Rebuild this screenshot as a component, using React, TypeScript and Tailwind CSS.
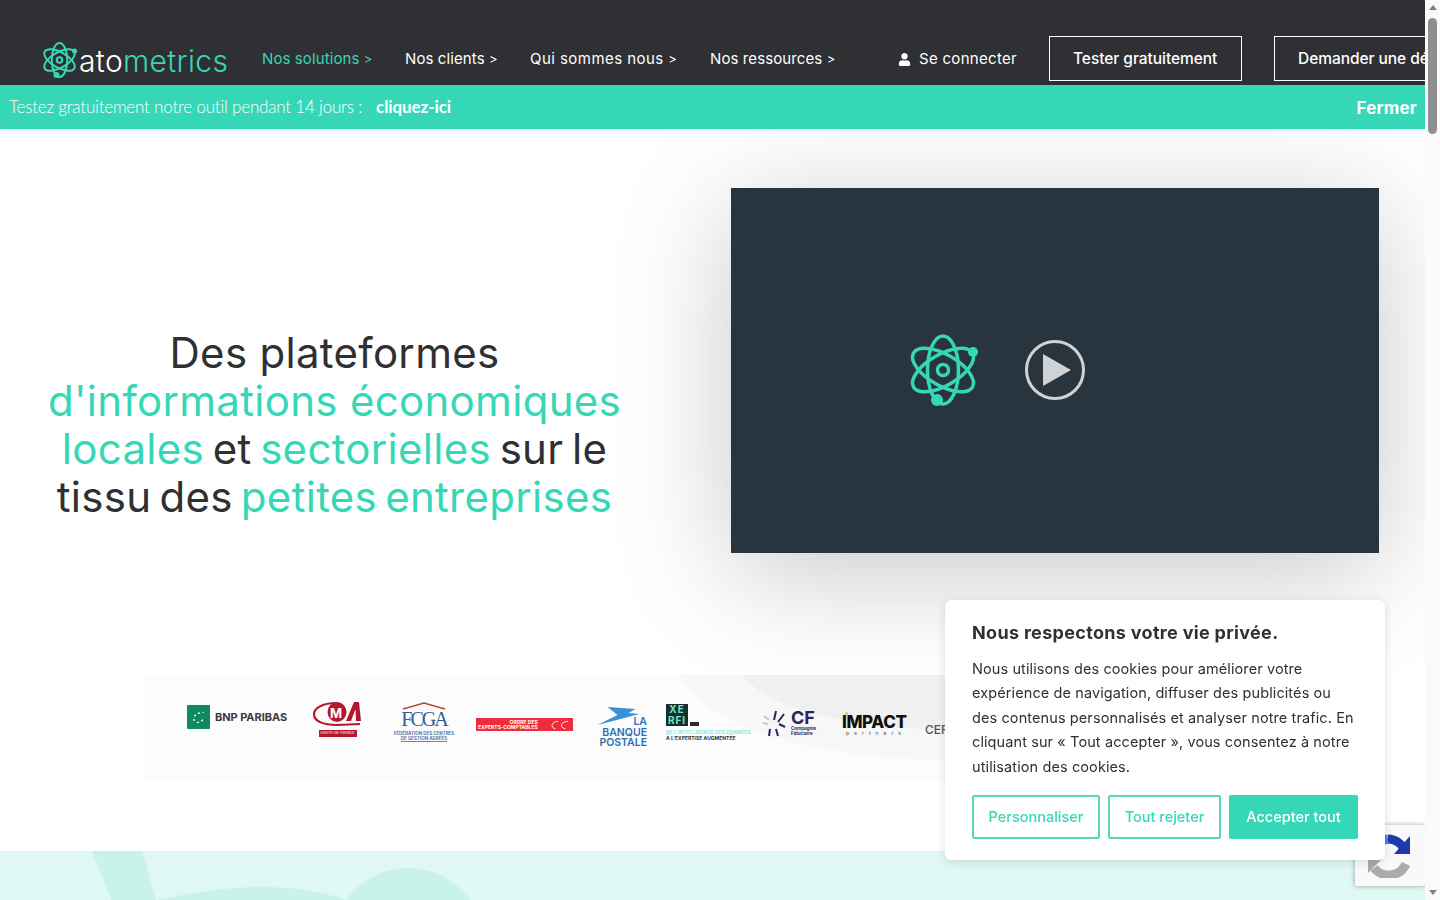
import { FaUser } from 'react-icons/fa';

const font = { fontFamily: 'Inter, "Noto Sans", sans-serif' };

function Atom({ className, weight = 3.5 }: { className: string; weight?: number }) {
  const stroke = '#36d7b7';
  return (
    <svg viewBox="0 0 72 72" fill="none" stroke={stroke} strokeWidth={weight} className={className}>
      <ellipse cx="35" cy="36" rx="15.5" ry="34" />
      <ellipse cx="35" cy="36" rx="15.5" ry="34" transform="rotate(60 35 36)" />
      <ellipse cx="35" cy="36" rx="15.5" ry="34" transform="rotate(120 35 36)" />
      <circle cx="35" cy="36" r="5.5" />
      <circle cx="65" cy="18" r="5" fill={stroke} stroke="none" />
      <circle cx="29" cy="66" r="6" fill={stroke} stroke="none" />
    </svg>
  );
}

function NavLink({ label, active, className }: { label: string; active?: boolean; className: string }) {
  return (
    <a className={`mt-[2px] text-[15px] whitespace-nowrap ${active ? 'text-[#36d7b7]' : 'text-white'} ${className}`}>
      {label} <span className="text-[13px]">&gt;</span>
    </a>
  );
}

function Logos() {
  return (
    <div className="relative z-0 ml-[143px] mt-[122px] h-[105px] w-[1140px] overflow-hidden bg-[#fcfcfc]">
      <svg viewBox="0 0 300 105" className="absolute left-[535px] top-0 h-[105px] w-[300px]">
        <path d="M2 0 C30 50 120 85 300 86 L300 0 Z" fill="#f7f7f7" />
        <path d="M65 0 C90 35 170 54 300 56 L300 0 Z" fill="#f0f0f0" />
      </svg>
      <div className="relative flex h-full items-start pl-[44px]">
        <div className="mt-[30px] flex w-[101px] shrink-0 items-center gap-[5px]">
          <div className="flex h-[24px] w-[23px] items-center justify-center rounded-[1px] bg-[#0f8a5f]">
            <svg viewBox="0 0 24 24" className="h-4 w-4" fill="none" stroke="#ffffff" strokeWidth="2" strokeDasharray="3 4">
              <path d="M5 18 C2 10 10 5 19 5" />
              <path d="M9 20 C14 21 18 17 19 13" />
            </svg>
          </div>
          <span className="whitespace-nowrap text-[11px] font-bold tracking-[-0.05px] text-[#3a3a3a]">BNP PARIBAS</span>
        </div>
        <div className="relative ml-[25px] mt-[26px] flex h-[36px] w-[49px] shrink-0 flex-col items-center">
          <svg viewBox="0 0 49 26" className="h-[26px] w-[49px]" fill="none">
            <path d="M24 2 C8 2 1 8 1 13 C1 20 10 24 24 24 L47 23" stroke="#b3182f" strokeWidth="2.2" />
            <ellipse cx="24" cy="11" rx="9.5" ry="10" fill="#b3182f" />
            <path d="M33 20 L41 1 L46 1 L48 20 L43 20 L42.5 8 L38 20 Z" fill="#b3182f" />
          </svg>
          <span className="absolute left-[17px] top-[4px] text-[13px] leading-[16px] font-bold text-white">M</span>
          <span className="mt-[3px] w-[38px] overflow-hidden bg-[#b3182f] text-center text-[3.5px] leading-[7px] whitespace-nowrap text-white">HAUTS-DE-FRANCE</span>
        </div>
        <div className="ml-[31px] mt-[27px] flex w-[62px] shrink-0 flex-col items-center">
          <svg viewBox="0 0 44 8" className="h-[8px] w-[44px]" fill="none" stroke="#c2402f" strokeWidth="1.5">
            <path d="M1 7 L22 1 L43 7" />
          </svg>
          <span className="text-[20px] leading-[19px] tracking-[-2px] text-[#2f5a9c]" style={{ fontFamily: '"Liberation Serif", serif' }}>FCGA</span>
          <span className="mt-[2px] whitespace-nowrap text-[4.5px] leading-[5px] font-bold text-[#5a78a8]">FÉDÉRATION DES CENTRES</span>
          <span className="whitespace-nowrap border-b border-[#d85a5a] text-[4.5px] leading-[5px] font-bold text-[#5a78a8]">DE GESTION AGRÉÉS</span>
        </div>
        <div className="ml-[21px] mt-[43px] flex h-[13px] w-[97px] shrink-0 items-center justify-between bg-[#ee2d3c] pl-[2px] pr-[3px]">
          <span className="text-right text-[5px] leading-[5px] font-bold whitespace-nowrap text-white">ORDRE DES<br />EXPERTS-COMPTABLES</span>
          <svg viewBox="0 0 24 10" className="h-[10px] w-[22px]" fill="none" stroke="#ffffff" strokeWidth="1">
            <path d="M11 1 C4 1 2 8 8 9 M22 1 C14 1 12 8 19 9" />
          </svg>
        </div>
        <div className="ml-[21px] mt-[32px] flex w-[53px] shrink-0 flex-col items-end">
          <svg viewBox="0 0 50 18" className="-mb-[8px] h-[18px] w-[53px] self-start" fill="#3a8fd6">
            <path d="M12 0 L40 2 L33 6 L44 7 L2 18 L22 8 Z" />
          </svg>
          <span className="text-right text-[10.5px] leading-[10.5px] font-semibold text-[#2d6fb5]">LA<br />BANQUE<br />POSTALE</span>
        </div>
        <div className="ml-[19px] mt-[29px] w-[84px] shrink-0">
          <div className="flex items-end gap-[2px]">
            <span className="w-[22px] bg-[#15302c] text-center text-[10px] leading-[11px] font-bold tracking-[1px] text-[#6fe3c7]">XE<br />RFI</span>
            <span className="h-[4px] w-[9px] bg-[#2a2a2a]" />
          </div>
          <p className="mt-[3px] whitespace-nowrap text-[5px] leading-[6px] font-bold text-[#8fe9dc]">DE L'INTELLIGENCE DES DONNÉES</p>
          <p className="whitespace-nowrap text-[5px] leading-[6px] font-bold text-[#333333]">À L'EXPERTISE AUGMENTÉE</p>
        </div>
        <div className="ml-[12px] mt-[35px] flex w-[58px] shrink-0 items-start gap-[5px]">
          <svg viewBox="0 0 24 28" className="h-[28px] w-[24px]" fill="none" stroke="#2a2560" strokeWidth="2">
            <path d="M14 1 L12 10 M22 4 L16 12 M23 17 L17 14 M16 26 L14 19 M7 26 L8 19" />
            <path d="M1 13 L6 14 M2 6 L7 10" stroke="#c9c9d6" />
          </svg>
          <div>
            <p className="text-[18px] leading-[16px] font-bold text-[#2a2560]">CF</p>
            <p className="text-[4.5px] leading-[5px] font-bold text-[#2a2560]">Compagnie<br />Fiduciaire</p>
          </div>
        </div>
        <div className="relative ml-[22px] mt-[39px] w-[66px] shrink-0">
          <span className="absolute -top-[2px] left-[3px] h-[3px] w-[3px] rounded-full bg-[#e8c440]" />
          <p className="text-[17px] leading-[16px] font-extrabold tracking-[-0.4px] whitespace-nowrap text-[#111111]">IMPACT</p>
          <p className="pl-[4px] text-[5px] leading-[6px] tracking-[5px] whitespace-nowrap text-[#555555]">partners</p>
        </div>
        <span className="ml-[17px] mt-[48px] shrink-0 text-[12px] leading-[14px] font-medium text-[#555555]">CERFRANCE</span>
      </div>
    </div>
  );
}

function CookieCard() {
  return (
    <div className="fixed left-[945px] top-[600px] z-20 h-[260px] w-[440px] rounded-[6px] bg-white px-[27px] pt-[21px] shadow-[0_2px_10px_rgba(0,0,0,0.12)]">
      <h2 className="text-[18px] leading-[24px] font-bold tracking-[0.32px] whitespace-nowrap text-[#2f3033]">Nous respectons votre vie privée.</h2>
      <p className="mt-[11.5px] text-[14.5px] leading-[24.5px] tracking-[0.1px] whitespace-nowrap text-[#2f3033]">
        Nous utilisons des cookies pour améliorer votre<br />
        expérience de navigation, diffuser des publicités ou<br />
        des contenus personnalisés et analyser notre trafic. En<br />
        cliquant sur « Tout accepter », vous consentez à notre<br />
        utilisation des cookies.
      </p>
      <div className="mt-[15.5px] flex gap-2">
        <button className="h-[44px] w-[128px] rounded-[2px] border-2 border-[#5bd3bb] text-[14.5px] font-medium text-[#36d7b7]">Personnaliser</button>
        <button className="h-[44px] w-[113px] rounded-[2px] border-2 border-[#5bd3bb] text-[14.5px] font-medium text-[#36d7b7]">Tout rejeter</button>
        <button className="h-[44px] w-[129px] rounded-[2px] bg-[#36d7b7] text-[14.5px] font-medium text-white">Accepter tout</button>
      </div>
    </div>
  );
}

function Recaptcha() {
  return (
    <div className="fixed left-[1355px] top-[825px] z-10 flex h-[61px] w-[70px] items-center justify-center rounded-[2px] bg-[#f9f9f9] shadow-[0_0_5px_rgba(0,0,0,0.35)]">
      <svg viewBox="0 0 44 44" className="h-[44px] w-[44px]" fill="none">
        <path d="M6 34 A19 19 0 0 0 38 30" stroke="#ababab" strokeWidth="9" />
        <path d="M0 24 L15 24 L0 39 Z" fill="#ababab" />
        <path d="M20 5 A18 18 0 0 1 36 15" stroke="#1c3aa9" strokeWidth="9" />
        <path d="M42 2 L42 20 L26 20 Z" fill="#1c3aa9" />
        <path d="M20 5 A18 18 0 0 0 10 10" stroke="#4285f4" strokeWidth="9" />
      </svg>
    </div>
  );
}

function Scrollbar() {
  return (
    <div className="fixed right-0 top-0 z-30 flex h-[900px] w-[15px] flex-col items-center justify-between bg-[#fafafa] py-[5px]">
      <span className="h-0 w-0 border-x-[4px] border-b-[5px] border-x-transparent border-b-[#808080]" />
      <span className="absolute left-[3px] top-[18px] h-[116px] w-[9px] rounded-full bg-[#8f8f8f]" />
      <span className="h-0 w-0 border-x-[4px] border-t-[5px] border-x-transparent border-t-[#808080]" />
    </div>
  );
}

export default function App() {
  return (
    <div className="h-[900px] w-[1425px] overflow-hidden bg-white" style={font}>
      <header className="flex h-[85px] items-start overflow-hidden bg-[#2f3033] pt-[36px]">
        <div className="-mt-[1px] ml-[42px] flex w-[190px] shrink-0 items-center">
          <Atom className="mt-[6px] h-[36px] w-[36px]" weight={4} />
          <span className="ml-[1px] mt-[8px] text-[30px] leading-[36px] font-light tracking-[0.35px]">
            <span className="text-white">ato</span><span className="text-[#36d7b7]">metrics</span>
          </span>
        </div>
        <nav className="ml-[30px] flex h-[45px] shrink-0 items-center">
          <NavLink label="Nos solutions" active className="w-[143px] tracking-[0.1px]" />
          <NavLink label="Nos clients" className="w-[125px] tracking-[0.1px]" />
          <NavLink label="Qui sommes nous" className="w-[180px] tracking-[0.45px]" />
          <NavLink label="Nos ressources" className="w-[188px] tracking-[0.1px]" />
          <a className="mt-[2px] flex w-[151px] items-center gap-[8px] text-[15px] tracking-[0.3px] whitespace-nowrap text-white">
            <FaUser size={13} />
            Se connecter
          </a>
          <button className="h-[45px] w-[193px] shrink-0 border border-white px-[23px] text-left text-[15.5px] font-medium tracking-[-0.05px] whitespace-nowrap text-white">Tester gratuitement</button>
          <button className="ml-[32px] h-[45px] shrink-0 border border-white px-[23px] text-left text-[15.5px] font-medium tracking-[-0.05px] whitespace-nowrap text-white">Demander une démo</button>
        </nav>
      </header>

      <div className="relative z-10 flex h-[44px] items-center justify-between bg-[#36d7b7] pl-[9px] pr-[8px] shadow-[0_1px_4px_rgba(0,0,0,0.12)]">
        <p className="text-[17px] font-light tracking-[-0.2px] whitespace-nowrap text-white" style={{ fontFamily: 'Lato, sans-serif' }}>
          Testez gratuitement notre outil pendant 14 jours :
          <a className="ml-[14px] font-bold tracking-[-0.1px]">cliquez-ici</a>
        </p>
        <a className="mt-[3px] text-[17px] font-bold tracking-[0.2px] text-white">Fermer</a>
      </div>

      <section className="flex items-center pt-[59px]">
        <h1 className="mt-[108px] w-[669px] shrink-0 text-center text-[42px] leading-[48px] font-normal tracking-[0.3px] text-[#2f3033]">
          Des plateformes<br />
          <span className="text-[#36d7b7]">d'informations économiques</span><br />
          <span className="[word-spacing:-3.5px]">
            <span className="text-[#36d7b7]">locales</span> et <span className="text-[#36d7b7]">sectorielles</span> sur le
          </span><br />
          <span className="[word-spacing:-4px]">
            tissu des <span className="text-[#36d7b7]">petites entreprises</span>
          </span>
        </h1>
        <div className="ml-[62px] flex h-[365px] w-[648px] shrink-0 items-center bg-[#29353e] pl-[177px] shadow-[0_20px_110px_rgba(0,0,0,0.22)]">
          <Atom className="mb-[2px] h-[72px] w-[72px]" />
          <div className="mb-[2px] ml-[45px] flex h-[60px] w-[60px] items-center justify-center rounded-full border-[3px] border-[#d0d3d6]">
            <svg viewBox="0 0 28 32" className="ml-[4px] h-[32px] w-[28px]" fill="#d0d3d6">
              <path d="M0 0 L28 16 L0 32 Z" />
            </svg>
          </div>
        </div>
      </section>

      <Logos />

      <section className="relative mt-[71px] h-[49px] overflow-hidden bg-[#dff8f3]">
        <svg viewBox="0 0 500 49" className="absolute left-0 top-0 h-[49px] w-[500px]" fill="#c9f3ea">
          <path d="M92 0 L142 0 L156 49 L111 49 Z" />
          <path d="M156 49 Q220 36 260 36 Q310 36 347 49 Z" />
          <circle cx="408" cy="93" r="76" />
        </svg>
      </section>

      <CookieCard />
      <Recaptcha />
      <Scrollbar />
    </div>
  );
}
